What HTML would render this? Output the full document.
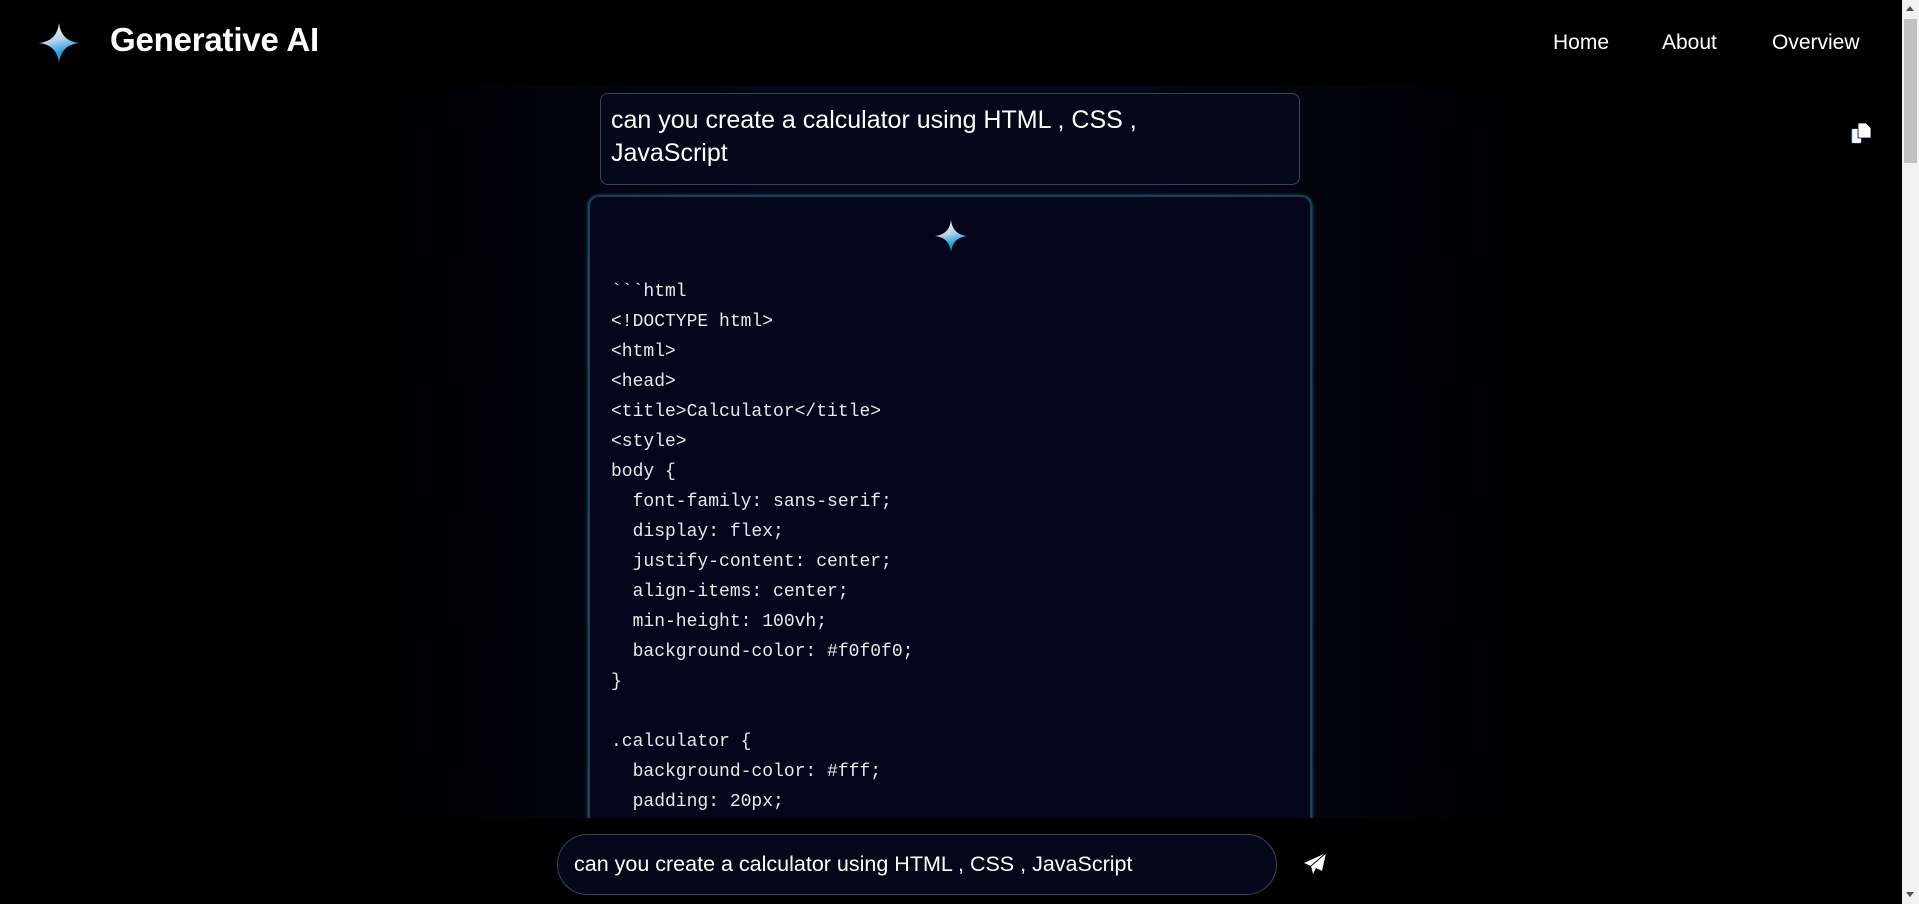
<!DOCTYPE html>
<html><head><meta charset="utf-8"><style>
*{margin:0;padding:0;box-sizing:border-box}
html,body{width:1919px;height:904px;overflow:hidden;background:#000;font-family:"Liberation Sans",sans-serif;color:#fff}
.hdr{position:absolute;left:0;top:0;width:1902px;height:86px;background:#000}
.logo{position:absolute;left:39px;top:23px}
.title{position:absolute;left:110px;top:21px;font-size:33px;font-weight:bold;letter-spacing:-0.2px}
.nav a{position:absolute;top:31px;font-size:21px;color:#fff;text-decoration:none}
.main{position:absolute;left:0;top:86px;width:1902px;height:732px;background:linear-gradient(90deg,#000 0%,#000 20%,#05071a 40%,#05071a 60%,#000 80%,#000 100%)}
.user{position:absolute;left:600px;top:93px;width:700px;height:92px;border:1px solid #3a4154;border-radius:8px;background:#050818;font-size:25px;line-height:33px;padding:10px 10px}
.resp{position:absolute;left:589px;top:196px;width:722px;height:640px;border-radius:10px;background:#03061a;border:1px solid #1b3a4c;box-shadow:-1px 0 3px #1f6f86,1px 0 3px #1f6f86}
.star2{position:absolute;left:345px;top:23px}
pre{position:absolute;left:21px;top:80px;font-family:"Liberation Mono",monospace;font-size:18px;line-height:30px;color:#e8e8e8}
.bot{position:absolute;left:0;top:818px;width:1902px;height:86px;background:#000}
.inp{position:absolute;left:557px;top:16px;width:720px;height:61px;border:1px solid #3a4154;border-radius:31px;background:#050818;font-size:21.5px;padding:17px 16px;color:#fff}
.sb{position:absolute;left:1902px;top:0;width:17px;height:904px;background:#f1f1f1}
.thumb{position:absolute;left:2px;top:19px;width:13px;height:144px;background:#c1c1c1}
</style></head><body>
<div class="hdr">
<svg class="logo" width="40" height="40" viewBox="0 0 40 40"><defs><linearGradient id="g" x1="0.2" y1="0" x2="0.5" y2="1"><stop offset="0" stop-color="#fff"/><stop offset="0.45" stop-color="#b8d4e8"/><stop offset="0.75" stop-color="#2aa6e0"/><stop offset="1" stop-color="#0c8fd0"/></linearGradient></defs><path d="M20 0 Q22 18 40 20 Q22 22 20 40 Q18 22 0 20 Q18 18 20 0Z" fill="url(#g)"/></svg>
<div class="title">Generative AI</div>
<div class="nav"><a style="left:1553px">Home</a><a style="left:1662px">About</a><a style="left:1772px">Overview</a></div>
</div>
<div class="main">
<svg style="position:absolute;left:1851px;top:36px" width="22" height="22" viewBox="0 0 22 22"><rect x="1" y="7" width="9" height="14" rx="1" fill="#fff" stroke="#9cf" stroke-width="0.6"/><path d="M7 1 H15 L20 6 V16 H7Z" fill="#fff" stroke="#000" stroke-width="0.8"/></svg>
</div>
<div class="user">can you create a calculator using HTML , CSS ,<br>JavaScript</div>
<div class="resp">
<svg class="star2" width="32" height="32" viewBox="0 0 40 40"><defs><linearGradient id="g2" x1="0.2" y1="0" x2="0.5" y2="1"><stop offset="0" stop-color="#fff"/><stop offset="0.45" stop-color="#b8d4e8"/><stop offset="0.75" stop-color="#2aa6e0"/><stop offset="1" stop-color="#0c8fd0"/></linearGradient></defs><path d="M20 0 Q22 18 40 20 Q22 22 20 40 Q18 22 0 20 Q18 18 20 0Z" fill="url(#g2)"/></svg>
<pre>&#96;&#96;&#96;html
&lt;!DOCTYPE html&gt;
&lt;html&gt;
&lt;head&gt;
&lt;title&gt;Calculator&lt;/title&gt;
&lt;style&gt;
body {
  font-family: sans-serif;
  display: flex;
  justify-content: center;
  align-items: center;
  min-height: 100vh;
  background-color: #f0f0f0;
}

.calculator {
  background-color: #fff;
  padding: 20px;
  border-radius: 5px;</pre>
</div>
<div class="bot">
<div class="inp">can you create a calculator using HTML , CSS , JavaScript</div>
<svg style="position:absolute;left:1303px;top:34px" width="24" height="24" viewBox="0 0 24 24"><path d="M23 1 L1 11 L8 14 L10 22 L13 16 L19 19Z" fill="#fff"/><path d="M23 1 L8 14" stroke="#000" stroke-width="1"/></svg>
</div>
<div class="sb"><div style="position:absolute;left:4px;top:6px;border-left:4px solid transparent;border-right:4px solid transparent;border-bottom:5px solid #505050"></div><div class="thumb"></div><div style="position:absolute;left:4px;top:892px;border-left:4px solid transparent;border-right:4px solid transparent;border-top:5px solid #505050"></div></div>
</body></html>
